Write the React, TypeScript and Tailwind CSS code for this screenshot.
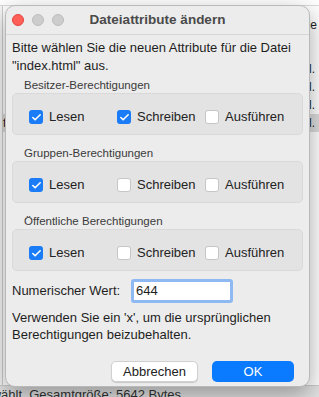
import { Check } from "lucide-react";

const font = { fontFamily: '"Liberation Sans", "Noto Sans", sans-serif' };

function Box({ checked, label }: { checked: boolean; label: string }) {
  return (
    <div className="flex items-center gap-[6px]">
      {checked ? (
        <div className="w-[14px] h-[14px] rounded-[3px] bg-[#1a7cf6] flex items-center justify-center">
          <Check className="w-[11px] h-[11px] text-white" strokeWidth={3.5} />
        </div>
      ) : (
        <div className="w-[14px] h-[14px] rounded-[3px] bg-white border border-[#c6c6c6]" />
      )}
      <span className="text-[13px] leading-[14px] text-[#222]">{label}</span>
    </div>
  );
}

function Group({ title, perms }: { title: string; perms: boolean[] }) {
  const names = ["Lesen", "Schreiben", "Ausführen"];
  return (
    <div className="flex flex-col">
      <div className="pl-[12px] text-[11.5px] leading-[14px] text-[#3b3b3b]">{title}</div>
      <div className="mt-[1px] h-[42px] rounded-[5px] bg-[#e3e3e3] border border-[#d9d9d9] grid grid-cols-[88px_88px_88px] content-start pl-[16px] pt-[16px]">
        {perms.map((p, i) => (
          <Box key={names[i]} checked={p} label={names[i]} />
        ))}
      </div>
    </div>
  );
}

export default function App() {
  return (
    <div className="relative w-[319px] h-[397px] overflow-hidden bg-[#f7f7f7]" style={font}>
      {/* app window behind */}
      <div className="absolute inset-0 flex flex-col">
        <div className="h-[6px] border-b border-[#dcdcdc] bg-white" />
        <div className="flex-1 flex">
          <div className="w-[3px] border-r border-[#cfcfcf]" />
          <div className="flex-1 flex flex-col bg-white pt-[10px] text-[12px] text-[#222]">
            <div className="h-[18px] flex justify-end pr-[2px]">le</div>
            <div className="h-[18px] mt-[26px] flex justify-end pr-[4px]">l.</div>
            <div className="h-[18px] flex justify-end pr-[4px]">l.</div>
            <div className="h-[18px] flex justify-end pr-[4px]">l.</div>
            <div className="h-[18px] flex justify-between pr-[4px] bg-[#dcdcdc]">
              <span>t</span>
              <span>l.</span>
            </div>
          </div>
        </div>
        <div className="h-[12px] bg-[#e2e2e2] border-t border-[#cdcdcd] overflow-hidden">
          <div className="w-[181px] flex justify-end whitespace-nowrap text-[13px] leading-[15px] text-[#333] mt-[1px]">
            Datei ausgewählt. Gesamtgröße: 5642 Bytes
          </div>
        </div>
      </div>

      {/* dialog */}
      <div className="absolute left-[5px] top-[5px] w-[305px] h-[382px] rounded-[10px] bg-[#ececec] border border-[#b9b9b9] shadow-[0_8px_24px_rgba(0,0,0,0.35)] flex flex-col overflow-hidden">
        <div className="relative h-[29px] shrink-0 flex items-center justify-center border-b border-[#d6d6d6]">
          <div className="absolute left-[6px] top-[8px] flex gap-[8px]">
            <div className="w-[12px] h-[12px] rounded-full bg-[#fe5f57] border border-[#e0443e]" />
            <div className="w-[12px] h-[12px] rounded-full bg-[#cdcdcd] border border-[#bcbcbc]" />
            <div className="w-[12px] h-[12px] rounded-full bg-[#cdcdcd] border border-[#bcbcbc]" />
          </div>
          <span className="text-[13.5px] font-bold text-[#4a4a4a]">Dateiattribute ändern</span>
        </div>

        <div className="flex flex-col px-[6px] pt-[4px]">
          <p className="text-[13px] leading-[18px] text-[#1e1e1e] whitespace-nowrap">
            Bitte wählen Sie die neuen Attribute für die Datei
            <br />
            "index.html" aus.
          </p>
          <div className="mt-[3px] flex flex-col gap-[11px]">
            <Group title="Besitzer-Berechtigungen" perms={[true, true, false]} />
            <Group title="Gruppen-Berechtigungen" perms={[true, false, false]} />
            <Group title="Öffentliche Berechtigungen" perms={[true, false, false]} />
          </div>

          <div className="mt-[8px] flex items-center">
            <span className="w-[119px] text-[13px] text-[#1e1e1e]">Numerischer Wert:</span>
            <div className="w-[102px] h-[24px] rounded-[3px] border-[3px] border-[#8fb9f3] bg-white flex items-center pl-[2px] text-[13px] text-[#1e1e1e]">
              644
            </div>
          </div>

          <p className="mt-[6px] text-[13px] leading-[17px] text-[#1e1e1e] whitespace-nowrap">
            Verwenden Sie ein 'x', um die ursprünglichen
            <br />
            Berechtigungen beizubehalten.
          </p>

          <div className="mt-[18px] flex justify-end gap-[14px] pr-[9px]">
            <button className="w-[87px] h-[21px] rounded-[5px] bg-white border border-[#d0d0d0] shadow-[0_1px_1px_rgba(0,0,0,0.15)] text-[13px] text-[#222]">
              Abbrechen
            </button>
            <button className="w-[82px] h-[21px] rounded-[5px] bg-[#0a7bff] text-[13px] text-white">
              OK
            </button>
          </div>
        </div>
      </div>
    </div>
  );
}
